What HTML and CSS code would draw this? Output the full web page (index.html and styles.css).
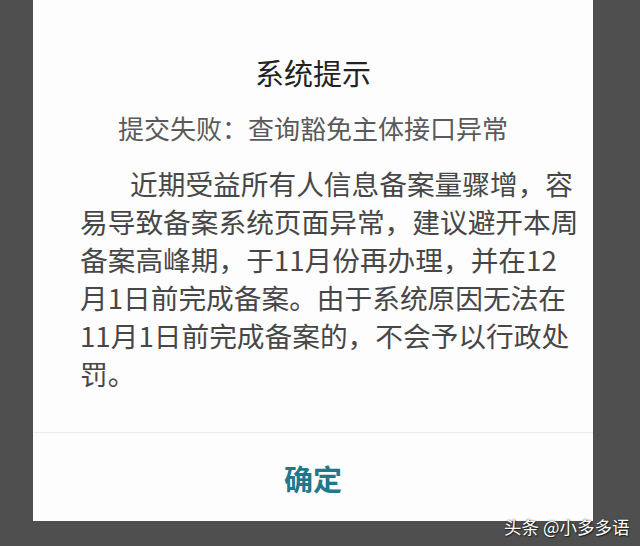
FILE: index.html
```html
<!DOCTYPE html>
<html lang="zh-CN">
<head>
<meta charset="utf-8">
<title>系统提示</title>
<link rel="stylesheet" href="styles.css">
</head>
<body>
<div class="screen">
  <div class="dialog">
    <div class="content">
      <h1 class="title">系统提示</h1>
      <p class="subtitle">提交失败：查询豁免主体接口异常</p>
      <p class="message">近期受益所有人信息备案量骤增，容<br>易导致备案系统页面异常，建议避开本周<br>备案高峰期，于11月份再办理，并在12<br>月1日前完成备案。由于系统原因无法在<br>11月1日前完成备案的，不会予以行政处<br>罚。</p>
    </div>
    <div class="actions">
      <button class="confirm">确定</button>
    </div>
  </div>
  <div class="watermark">头条 @小多多语</div>
</div>
</body>
</html>
```
FILE: styles.css
```css
html, body {
  margin: 0;
  padding: 0;
}
body {
  width: 640px;
  height: 546px;
  background: #4f4f4f;
  font-family: "Noto Sans CJK SC", "Noto Sans", sans-serif;
  overflow: hidden;
}
.screen {
  position: relative;
  width: 640px;
  height: 546px;
}
.dialog {
  margin-left: 33px;
  width: 560px;
  height: 521px;
  background: #fdfdfd;
  display: flex;
  flex-direction: column;
}
.content {
  flex: 1;
  padding: 52px 13px 0 47px;
  border-bottom: 1px solid #ececec;
}
.title {
  margin: 0;
  font-size: 29px;
  line-height: 40px;
  font-weight: 400;
  color: #222222;
  text-align: center;
  padding-right: 34px;
}
.subtitle {
  margin: 16px 0 0;
  font-size: 26px;
  line-height: 40px;
  color: #5a5a5a;
  text-align: center;
  padding-right: 34px;
}
.message {
  margin: 16px 0 0;
  font-size: 27.7px;
  line-height: 38px;
  color: #474747;
  text-indent: 50px;
  white-space: nowrap;
}
.actions {
  height: 88px;
  display: flex;
  align-items: center;
  justify-content: center;
}
.confirm {
  border: none;
  background: none;
  padding: 0;
  font-family: "Noto Sans CJK SC", sans-serif;
  font-size: 29px;
  font-weight: 700;
  color: #22788a;
  line-height: 40px;
  margin-top: 2px;
}
.watermark {
  position: absolute;
  left: 504px;
  top: 515px;
  font-size: 17.5px;
  line-height: 24px;
  color: #ffffff;
  white-space: nowrap;
  text-shadow: 0 0 2px #222, 1px 1px 1px #222;
}
```
